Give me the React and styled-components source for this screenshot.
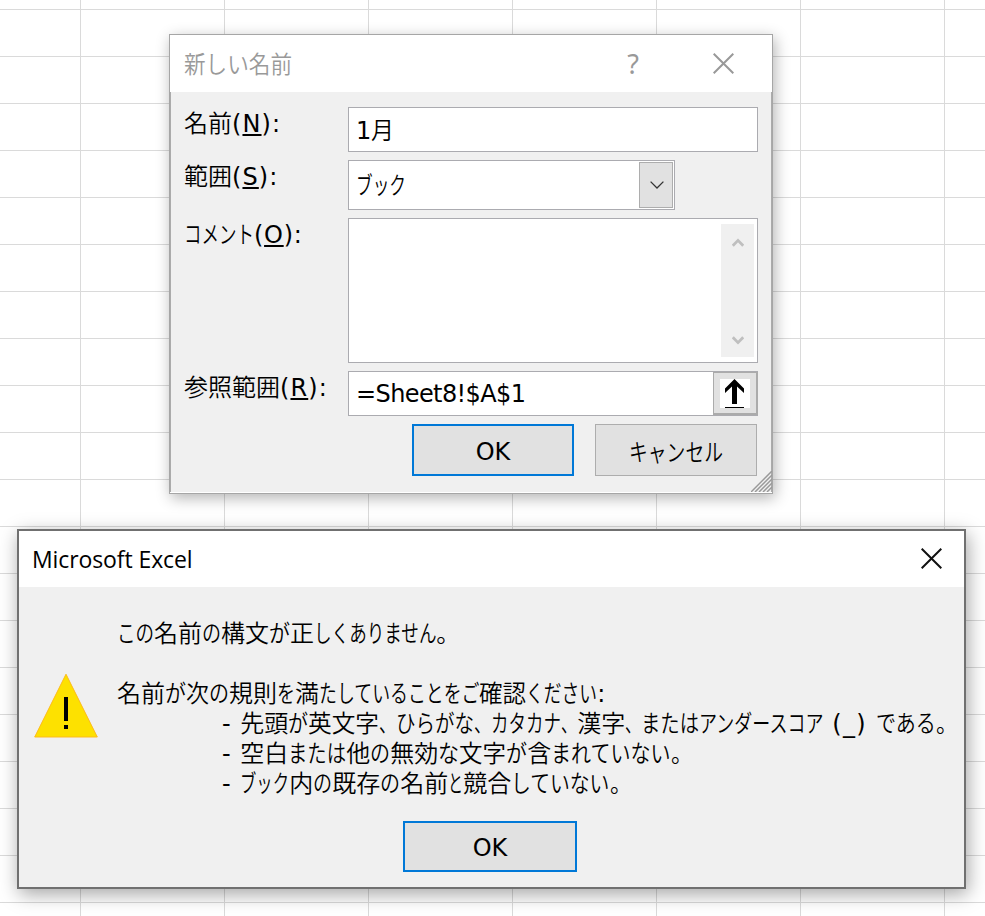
import React from 'react';
import styled, { createGlobalStyle } from 'styled-components';

const GlobalStyle = createGlobalStyle`
  * {
    box-sizing: border-box;
  }

  body {
    margin: 0;
    overflow: hidden;
  }
`;

const Sheet = styled.div`
  position: relative;
  width: 985px;
  height: 916px;
  overflow: hidden;
  background-color: #fff;
  background-image: linear-gradient(to right, #dadada 1px, transparent 1px),
    linear-gradient(to bottom, #dadada 1px, transparent 1px);
  background-size: 144px 47px;
  background-position: 80px 9px;
  font-family: 'DejaVu Sans', 'Noto Sans CJK JP', sans-serif;
  font-size: 24px;
  color: #000;
`;

const NameDialog = styled.section`
  position: absolute;
  left: 169px;
  top: 34px;
  width: 604px;
  height: 460px;
  display: flex;
  flex-direction: column;
  border: 1px solid #a6a6a6;
  background: #fff;
  box-shadow: 2px 4px 14px rgba(0, 0, 0, 0.3);
`;

const NameTitleBar = styled.header`
  display: flex;
  align-items: center;
  height: 57px;
  padding: 0 38px 0 14px;
  color: #999;
`;

const Title = styled.h1`
  flex: 1;
  margin: 0;
  font-size: 24px;
  font-weight: 400;
  line-height: 36px;
  white-space: nowrap;
`;

const HelpMark = styled.span`
  width: 14px;
  margin-right: 73px;
  font-family: 'Noto Sans', sans-serif;
  font-size: 27px;
  line-height: 36px;
  text-align: center;
`;

const NameBody = styled.div`
  position: relative;
  height: 400px;
  padding: 15px 13px 0;
  background: #f0f0f0;
  border: solid #ababab;
  border-width: 0 1px;
`;

const Form = styled.div`
  display: grid;
  grid-template-columns: 164px 410px;
  row-gap: 8px;
`;

const Label = styled.label`
  height: 32px;
  line-height: 30px;
  white-space: nowrap;
`;

const AccessKey = styled.span`
  text-decoration: underline;
  text-decoration-thickness: 2px;
  text-underline-offset: 2px;
`;

const Field = styled.div`
  display: flex;
  align-items: center;
  width: ${({ $width }) => $width || 410}px;
  height: ${({ $height }) => $height || 45}px;
  padding-left: 8px;
  background: #fff;
  border: 1px solid #ababb0;
  white-space: nowrap;
`;

const FieldValue = styled.span`
  flex: 1;
  margin-left: -1px;
  line-height: 32px;
`;

const DropButton = styled.div`
  display: flex;
  align-items: center;
  justify-content: center;
  width: 34px;
  height: 46px;
  margin-right: 1px;
  padding-left: 1px;
  background: #e1e1e1;
  border: 1px solid #adadad;
`;

const ScrollBar = styled.div`
  display: flex;
  flex-direction: column;
  justify-content: space-between;
  align-items: center;
  width: 33px;
  height: 133px;
  margin: 0 3px 0 auto;
  padding: 14px 0 12px;
  background: #f0f0f0;
`;

const PickButton = styled.div`
  display: flex;
  align-items: center;
  justify-content: center;
  width: 45px;
  height: 43px;
  margin-right: -1px;
  background: #e1e1e1;
  border: 1px solid #ababab;
  border-right-width: 2px;
  border-bottom-width: 2px;
`;

const ButtonRow = styled.div`
  display: flex;
  justify-content: flex-end;
  gap: 21px;
  margin-top: 8px;
  padding-right: 1px;
`;

const Button = styled.button`
  display: flex;
  align-items: center;
  justify-content: center;
  width: ${({ $width }) => $width || 162}px;
  height: ${({ $height }) => $height || 52}px;
  padding: ${({ $primary }) => ($primary ? '3px 0 0' : '0')};
  background: #e1e1e1;
  border: ${({ $primary }) => ($primary ? '2px solid #0078d7' : '1px solid #adadad')};
  color: #000;
  font: inherit;
`;

const Grip = styled.svg`
  position: absolute;
  right: -1px;
  bottom: 0;
`;

const AlertDialog = styled.section`
  position: absolute;
  left: 17px;
  top: 529px;
  width: 949px;
  height: 360px;
  background: #f0f0f0;
  border: 2px solid #707070;
  box-shadow: 2px 5px 18px rgba(0, 0, 0, 0.36);
`;

const AlertTitleBar = styled.header`
  display: flex;
  align-items: center;
  height: 56px;
  padding: 0 22px 2px 13px;
  background: #fff;
`;

const AlertTitle = styled(Title)`
  padding-top: 2px;
  font-family: 'Open Sans', sans-serif;
  font-size: 23px;
  letter-spacing: -0.1px;
`;

const AlertContent = styled.div`
  display: flex;
  padding: 30px 0 0 15px;
`;

const WarningSlot = styled.div`
  width: 64px;
  padding-top: 56px;
  margin-right: 19px;
`;

const Message = styled.div`
  height: 180px;
`;

const Line = styled.p`
  height: 30px;
  margin: 0;
  padding-left: ${({ $indent }) => ($indent ? 105 : 0)}px;
  line-height: 30px;
  white-space: pre;
`;

const AlertFooter = styled.footer`
  display: flex;
  padding: 24px 0 0 384px;
`;

// A run of full-width characters squeezed to the given advance width.
const Run = styled.span`
  display: inline-block;
  font-family: 'Noto Sans CJK JP', sans-serif;
  font-weight: 350;
  transform: scaleX(${({ $w, children }) => $w / (children.length * 24)});
  transform-origin: left;
  margin-right: ${({ $w, children }) => $w - children.length * 24}px;
`;

const Latin = styled.span`
  letter-spacing: ${({ $spacing }) => $spacing || 0}px;
`;

function CloseIcon({ color }) {
  return (
    <svg width="21" height="21" viewBox="0 0 21 21" fill="none" stroke={color} strokeWidth="2">
      <path d="M.7.7 20.3 20.3M20.3.7.7 20.3" />
    </svg>
  );
}

function ScrollArrow({ down }) {
  return (
    <svg width="12" height="9" viewBox="0 0 12 9" fill="none" stroke="#bfbfbf" strokeWidth="2.8">
      <path d={down ? 'M.8 1.2 6 6.6 11.2 1.2' : 'M.8 7.8 6 2.4 11.2 7.8'} />
    </svg>
  );
}

function WarningIcon() {
  return (
    <svg width="64" height="65" viewBox="0 0 64 65">
      <path d="M32 1.2 63.3 64H.7Z" fill="#fde100" stroke="#fdbb1b" />
      <path d="M30 24h4v24h-4zM30 52h4v4h-4z" fill="#000" />
    </svg>
  );
}

const messageLines = [
  { runs: [['この', 37], ['名前', 48], ['の', 19], ['構文', 48], ['が', 21], ['正', 24], ['しくありません', 123], ['。', 24]] },
  { runs: [] },
  {
    runs: [
      ['名前', 48], ['が', 21], ['次', 23], ['の', 20], ['規則', 48], ['を', 18], ['満', 24],
      ['たしていることをご', 161], ['確認', 47], ['ください', 71],
    ],
    tail: ':',
  },
  {
    bullet: true,
    runs: [
      ['先頭', 48], ['が', 20], ['英文字', 71], ['、', 17], ['ひらがな', 78], ['、', 17], ['カタカナ', 70],
      ['、', 16], ['漢字', 48], ['、', 16], ['または', 58], ['アンダースコア', 126],
    ],
    tail: ' (_) ',
    end: [['である', 60], ['。', 22]],
  },
  {
    bullet: true,
    runs: [
      ['空白', 48], ['または', 58], ['他', 24], ['の', 20], ['無効', 48], ['な', 21], ['文字', 47],
      ['が', 21], ['含', 24], ['まれていない', 120], ['。', 22],
    ],
  },
  {
    bullet: true,
    runs: [
      ['ブック', 49], ['内', 24], ['の', 19], ['既存', 48], ['の', 20], ['名前', 48], ['と', 15],
      ['競合', 48], ['していない', 99], ['。', 22],
    ],
  },
];

function Runs({ items }) {
  return items.map(([text, w], i) => <Run key={i} $w={w}>{text}</Run>);
}

function NewNameDialog() {
  return (
    <NameDialog>
      <NameTitleBar>
        <Title><Run $w={108}>新しい名前</Run></Title>
        <HelpMark>?</HelpMark>
        <CloseIcon color="#999" />
      </NameTitleBar>
      <NameBody>
        <Form>
          <Label><Run $w={48}>名前</Run><Latin $spacing={1.1}>(<AccessKey>N</AccessKey>):</Latin></Label>
          <Field><FieldValue>1<Run $w={23}>月</Run></FieldValue></Field>

          <Label><Run $w={48}>範囲</Run><Latin $spacing={1.1}>(<AccessKey>S</AccessKey>):</Latin></Label>
          <Field $width={327} $height={50}>
            <FieldValue><Run $w={50}>ブック</Run></FieldValue>
            <DropButton>
              <svg width="14" height="8" viewBox="0 0 14 8" fill="none" stroke="#333" strokeWidth="1.3">
                <path d="M.6.6 7 7 13.4.6" />
              </svg>
            </DropButton>
          </Field>

          <Label><Run $w={70}>コメント</Run><Latin $spacing={0.7}>(<AccessKey>O</AccessKey>):</Latin></Label>
          <Field $height={145}>
            <ScrollBar>
              <ScrollArrow />
              <ScrollArrow down />
            </ScrollBar>
          </Field>

          <Label><Run $w={96}>参照範囲</Run><Latin $spacing={1.1}>(<AccessKey>R</AccessKey>):</Latin></Label>
          <Field>
            <FieldValue><Latin $spacing={-0.6}>=Sheet8!$A$1</Latin></FieldValue>
            <PickButton>
              <svg width="30" height="29" viewBox="0 0 30 29">
                <path fill="#fff" d="M0 0h30v29H0z" />
                <path d="M14.5 0 24 9.5V14l-7-6.5V25h-5V7.5L5 14V9.5ZM5 28h19v1H5z" />
              </svg>
            </PickButton>
          </Field>
        </Form>
        <ButtonRow>
          <Button $primary>OK</Button>
          <Button><Run $w={94}>キャンセル</Run></Button>
        </ButtonRow>
        <Grip width="21" height="21" viewBox="0 0 21 21" stroke="#999" strokeWidth="1.5">
          <path d="M0 21 21 0M4 21 21 4M8 21 21 8M12 21 21 12M16 21 21 16" />
        </Grip>
      </NameBody>
    </NameDialog>
  );
}

function SyntaxAlert() {
  return (
    <AlertDialog>
      <AlertTitleBar>
        <AlertTitle>Microsoft Excel</AlertTitle>
        <CloseIcon color="#111" />
      </AlertTitleBar>
      <AlertContent>
        <WarningSlot><WarningIcon /></WarningSlot>
        <Message>
          {messageLines.map((line, i) => (
            <Line key={i} $indent={line.bullet}>
              {line.bullet && <Latin $spacing={1}>- </Latin>}
              <Runs items={line.runs} />
              {line.tail && <Latin $spacing={1.4}>{line.tail}</Latin>}
              {line.end && <Runs items={line.end} />}
            </Line>
          ))}
        </Message>
      </AlertContent>
      <AlertFooter>
        <Button $primary $width={174} $height={51}>OK</Button>
      </AlertFooter>
    </AlertDialog>
  );
}

function App() {
  return (
    <>
      <GlobalStyle />
      <Sheet>
        <NewNameDialog />
        <SyntaxAlert />
      </Sheet>
    </>
  );
}

export default App;
